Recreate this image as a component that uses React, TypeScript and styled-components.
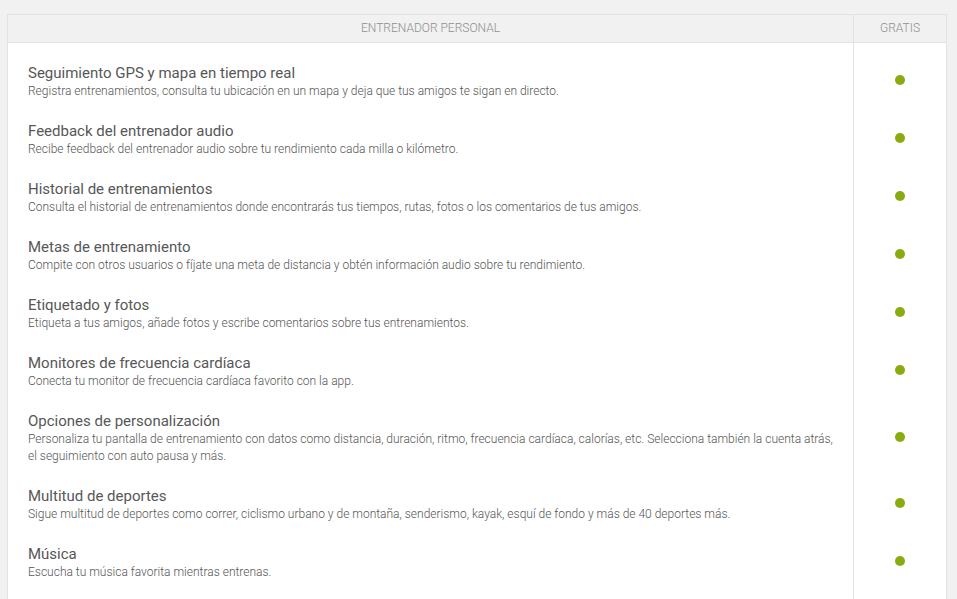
import styled, { createGlobalStyle } from "styled-components";

const features = [
  {
    title: "Seguimiento GPS y mapa en tiempo real",
    text: "Registra entrenamientos, consulta tu ubicación en un mapa y deja que tus amigos te sigan en directo.",
  },
  {
    title: "Feedback del entrenador audio",
    text: "Recibe feedback del entrenador audio sobre tu rendimiento cada milla o kilómetro.",
  },
  {
    title: "Historial de entrenamientos",
    text: "Consulta el historial de entrenamientos donde encontrarás tus tiempos, rutas, fotos o los comentarios de tus amigos.",
  },
  {
    title: "Metas de entrenamiento",
    text: "Compite con otros usuarios o fíjate una meta de distancia y obtén información audio sobre tu rendimiento.",
  },
  {
    title: "Etiquetado y fotos",
    text: "Etiqueta a tus amigos, añade fotos y escribe comentarios sobre tus entrenamientos.",
  },
  {
    title: "Monitores de frecuencia cardíaca",
    text: "Conecta tu monitor de frecuencia cardíaca favorito con la app.",
  },
  {
    title: "Opciones de personalización",
    text: "Personaliza tu pantalla de entrenamiento con datos como distancia, duración, ritmo, frecuencia cardíaca, calorías, etc. Selecciona también la cuenta atrás, el seguimiento con auto pausa y más.",
  },
  {
    title: "Multitud de deportes",
    text: "Sigue multitud de deportes como correr, ciclismo urbano y de montaña, senderismo, kayak, esquí de fondo y más de 40 deportes más.",
  },
  {
    title: "Música",
    text: "Escucha tu música favorita mientras entrenas.",
  },
];

const GlobalStyle = createGlobalStyle`
  body {
    margin: 0;
    background: #f1f1f1;
    font-family: Roboto, "Liberation Sans", sans-serif;
  }
`;

const Page = styled.div`
  padding: 14px 10px 0 7px;
`;

const Table = styled.div`
  display: grid;
  grid-template-columns: 845px 1fr;
  border: 1px solid #e2e2e2;
  border-bottom: none;
`;

const HeadCell = styled.div<{ $last?: boolean }>`
  height: 26px;
  padding-bottom: 1px;
  display: flex;
  align-items: center;
  justify-content: center;
  font-size: 12px;
  font-weight: 300;
  color: #8f8f8f;
  text-transform: uppercase;
  border-bottom: 1px solid #e2e2e2;
  border-left: ${(p) => (p.$last ? "1px solid #e2e2e2" : "none")};
`;

const FeatureColumn = styled.div`
  background: #fff;
  padding: 10px 18px 10px 20px;
`;

const PlanColumn = styled.div`
  background: #fff;
  border-left: 1px solid #e2e2e2;
  padding: 10px 0;
`;

const Row = styled.div`
  padding: 11px 0;
`;

const DotRow = styled.div<{ $lines: number }>`
  height: ${(p) => 58 + (p.$lines - 1) * 17}px;
  display: flex;
  align-items: center;
  justify-content: center;
`;

const Title = styled.div`
  font-size: 15px;
  line-height: 19px;
  color: #575757;
`;

const Text = styled.div`
  font-size: 12px;
  line-height: 17px;
  font-weight: 300;
  color: #555;
`;

const Dot = styled.span`
  width: 10px;
  height: 10px;
  border-radius: 50%;
  background: #8aab10;
  margin-bottom: 4px;
`;

export default function App() {
  return (
    <Page>
      <GlobalStyle />
      <Table>
        <HeadCell>Entrenador personal</HeadCell>
        <HeadCell $last>Gratis</HeadCell>
        <FeatureColumn>
          {features.map((f) => (
            <Row key={f.title}>
              <Title>{f.title}</Title>
              <Text>{f.text}</Text>
            </Row>
          ))}
        </FeatureColumn>
        <PlanColumn>
          {features.map((f) => (
            <DotRow key={f.title} $lines={f.text.length > 160 ? 2 : 1}>
              <Dot />
            </DotRow>
          ))}
        </PlanColumn>
      </Table>
    </Page>
  );
}
